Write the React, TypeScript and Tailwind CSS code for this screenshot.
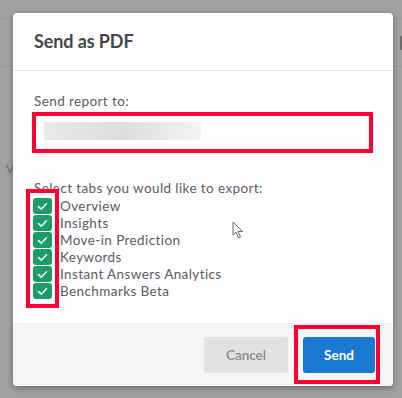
import React from 'react';

const tabs = ['Overview', 'Insights', 'Move-in Prediction', 'Keywords', 'Instant Answers Analytics', 'Benchmarks Beta'];

function Check() {
  return (
    <div className="w-[19px] h-[16px] mb-px rounded-[3px] bg-[#1d9b6c] flex items-center justify-center">
      <svg width="11" height="9" viewBox="0 0 11 9" fill="none">
        <path d="M1.5 4.6 L4.2 7.2 L9.5 1.8" stroke="#eafff5" strokeWidth="1.6" strokeLinecap="round" strokeLinejoin="round" />
      </svg>
    </div>
  );
}

export default function App() {
  return (
    <div className="relative w-[402px] h-[398px] overflow-hidden bg-[#a1a1a1] font-['Lato','Open_Sans',sans-serif]">
      {/* backdrop remnants */}
      <div className="absolute left-0 right-0 top-[18px] h-px bg-[#979797]" />
      <div className="absolute left-0 right-0 top-[66px] h-px bg-[#979797]" />
      <span className="absolute left-[6px] top-[160px] text-[12px] text-[#6e6e6e]">V</span>
      <div className="absolute right-0 top-[36px] w-[2px] h-[14px] bg-[#6d6d6d]" />

      <div className="absolute left-[13px] top-[13px] w-[380px] h-[373px] bg-[#fdfcff] rounded-[4px] shadow-[0_2px_6px_rgba(0,0,0,0.35)] flex flex-col">
        <div className="h-[58px] px-[21px] flex items-center border-b border-[#e4e4e8] shrink-0">
          <h2 className="text-[18px] font-bold text-[#474747] tracking-[-0.1px]">Send as PDF</h2>
        </div>

        <div className="flex-1 px-[21px] pt-[22px] relative">
          <p className="text-[13.5px] leading-[16px] tracking-[0.4px] text-[#5e5e5e]">Send report to:</p>
          <div className="mt-[3px] -ml-[2px] w-[341px] h-[41px] border-[4px] border-[#ff0033] pl-[8px] pt-[6px]">
            <div className="w-[157px] h-[18px] bg-gradient-to-r from-[#e9e9e9] via-[#dddddd] to-[#f4f4f4]" />
          </div>

          <p className="mt-[27px] text-[13.5px] leading-[17px] tracking-[0.4px] text-[#5e5e5e]">Select tabs you would like to export:</p>
          <div className="relative flex gap-[8px] mt-[1px]">
            <div className="flex flex-col -ml-[1px]">
              {tabs.map((t) => (
                <Check key={t} />
              ))}
            </div>
            <div className="flex flex-col">
              {tabs.map((t) => (
                <span key={t} className="text-[13.5px] leading-[17px] tracking-[0.4px] text-[#5c5c5c]">
                  {t}
                </span>
              ))}
            </div>
            <div className="absolute left-[-8px] top-[-9px] w-[33px] h-[119px] border-[4px] border-[#ff0033]" />
          </div>

          <svg className="absolute left-[219px] top-[150px]" width="12" height="19" viewBox="0 0 12 19" fill="none">
            <path d="M1 1 L1 14 L4 11 L6.5 17 L8.5 16 L6 10.5 L10.5 10.5 Z" fill="#fdfcff" stroke="#6a6a6a" strokeWidth="1" strokeLinejoin="round" />
          </svg>
        </div>

        <div className="h-[63px] shrink-0 border-t border-[#ebebee] bg-[#f4f5f7] rounded-b-[4px] flex items-center justify-end gap-[15px] pr-[18px]">
          <button className="w-[84px] h-[36px] rounded-[3px] bg-[#e1e1e1] text-[13.5px] font-semibold text-[#8a8a8a]">Cancel</button>
          <div className="relative">
            <button className="w-[72px] h-[36px] rounded-[3px] bg-[#1b78d0] text-[13.5px] font-bold text-white">Send</button>
            <div className="absolute -left-[9px] -right-[5px] -top-[12px] -bottom-[11px] border-[4px] border-[#ff0033]" />
          </div>
        </div>
      </div>
    </div>
  );
}
